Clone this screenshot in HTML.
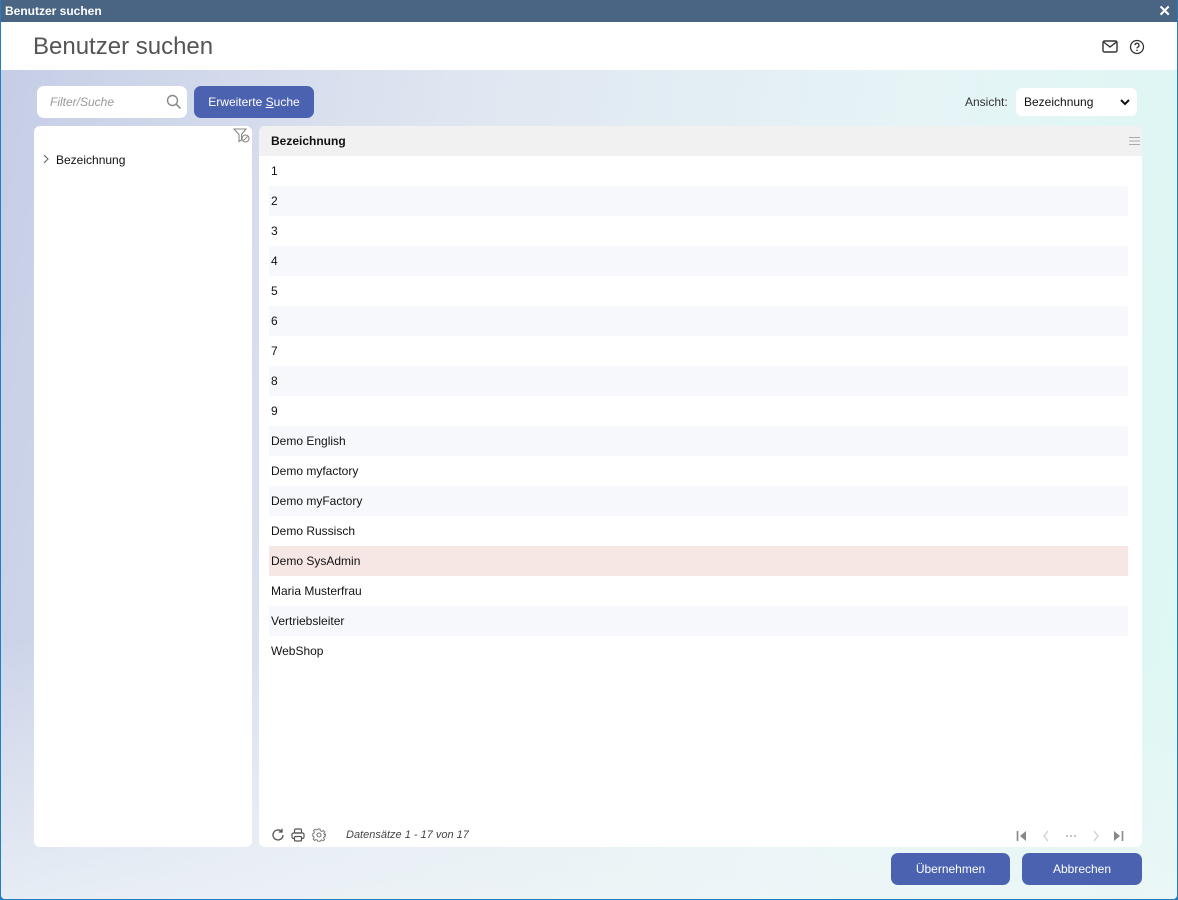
<!DOCTYPE html>
<html><head><meta charset="utf-8"><style>
*{box-sizing:border-box;margin:0;padding:0}
body{width:1178px;height:900px;overflow:hidden;font-family:"Liberation Sans",sans-serif;font-size:12px;color:#111;position:relative;background:#1f7fc4}
.win{position:absolute;left:1px;top:0;width:1176px;height:899px;background:linear-gradient(100deg,#c5cde6 0%,#dfe6f1 35%,#e6f4f6 70%,#dcf8f3 100%);border-radius:0 0 4px 4px;overflow:hidden}
.bot{position:absolute;left:0;right:0;bottom:0;height:260px;background:linear-gradient(180deg,rgba(255,255,255,0),rgba(240,246,248,.7))}
.tb{position:absolute;left:0;top:0;width:100%;height:22px;background:#4a6583;color:#fff;font-weight:bold;font-size:12px;padding:4px 4px}
.x{position:absolute;right:6px;top:2px;font-size:15px;color:#fff;font-weight:bold}
.hd{position:absolute;left:0;top:22px;width:100%;height:48px;background:#fff}
.hd h1{position:absolute;left:32px;top:11px;font-weight:normal;font-size:24px;color:#555}
.inp{position:absolute;left:36px;top:86px;width:150px;height:32px;background:#fff;border-radius:7px;color:#999;font-style:italic;padding:9px 13px}
.btn{position:absolute;background:#4a62b0;color:#fff;border-radius:7px;text-align:center;font-size:12px}
.pan{position:absolute;background:#fff;border-radius:6px;top:126px;height:721px}
.row{position:absolute;left:10px;width:859px;height:30px;padding:8px 2px}
svg.i{position:absolute}
</style></head><body>
<div class="win">
<div class="bot"></div>
<div class="tb">Benutzer suchen<span class="x">✕</span></div>
<div class="hd"><h1>Benutzer suchen</h1>
<svg style="position:absolute;left:1101px;top:18px" width="16" height="13" viewBox="0 0 16 13"><rect x="1" y="1" width="14" height="11" rx="1.5" fill="none" stroke="#333" stroke-width="1.4"/><path d="M1.5 2 L8 7 L14.5 2" fill="none" stroke="#333" stroke-width="1.4"/></svg>
<svg style="position:absolute;left:1128px;top:17px" width="16" height="16" viewBox="0 0 16 16"><circle cx="8" cy="8" r="6.5" fill="none" stroke="#333" stroke-width="1.3"/><path d="M6 6.3a2 2 0 1 1 2.6 1.9c-.5.2-.6.5-.6 1.2" fill="none" stroke="#333" stroke-width="1.3"/><circle cx="8" cy="11.3" r=".8" fill="#333"/></svg>
</div>
<div class="inp">Filter/Suche
<svg style="position:absolute;right:5px;top:8px" width="16" height="16" viewBox="0 0 16 16"><circle cx="6.5" cy="6.5" r="5" fill="none" stroke="#888" stroke-width="1.4"/><path d="M10.2 10.2 L14.5 14.5" stroke="#888" stroke-width="1.5"/></svg></div>
<div class="btn" style="left:193px;top:86px;width:120px;height:32px;padding-top:9px">Erweiterte <u>S</u>uche</div>
<div style="position:absolute;left:964px;top:95px;color:#333">Ansicht:</div>
<div style="position:absolute;left:1015px;top:88px;width:121px;height:28px;background:#fff;border-radius:6px;padding:7px 8px;font-size:12px">Bezeichnung
<svg style="position:absolute;right:7px;top:11px" width="10" height="7" viewBox="0 0 10 7"><path d="M1 1 L5 5 L9 1" fill="none" stroke="#111" stroke-width="2"/></svg></div>
<div class="pan" style="left:33px;width:218px">
<svg style="position:absolute;left:199px;top:2px" width="18" height="16" viewBox="0 0 18 16"><path d="M1 1 H13 L8.5 6.5 V12 L6 13.5 V6.5 Z" fill="none" stroke="#888" stroke-width="1.1"/><circle cx="12.5" cy="10.5" r="3.5" fill="#fff" stroke="#888" stroke-width="1.1"/><path d="M10.5 12.5 L14.5 8.5" stroke="#888"/></svg>
<svg style="position:absolute;left:9px;top:28px" width="6" height="10" viewBox="0 0 6 10"><path d="M1 1 L5 5 L1 9" fill="none" stroke="#666" stroke-width="1.1"/></svg>
<div style="position:absolute;left:22px;top:27px">Bezeichnung</div>
</div>
<div class="pan" style="left:258px;width:883px;overflow:hidden">
<div style="position:absolute;left:0;top:0;width:100%;height:30px;background:#f1f1f1;font-weight:bold;padding:8px 12px">Bezeichnung
<svg style="position:absolute;right:2px;top:10px" width="11" height="10" viewBox="0 0 11 10"><path d="M0 1.5H11M0 5H11M0 8.5H11" stroke="#aaa" stroke-width="1"/></svg></div>
<div class="row" style="top:30px">1</div>
<div class="row" style="top:60px;background:#f7f8fb">2</div>
<div class="row" style="top:90px">3</div>
<div class="row" style="top:120px;background:#f7f8fb">4</div>
<div class="row" style="top:150px">5</div>
<div class="row" style="top:180px;background:#f7f8fb">6</div>
<div class="row" style="top:210px">7</div>
<div class="row" style="top:240px;background:#f7f8fb">8</div>
<div class="row" style="top:270px">9</div>
<div class="row" style="top:300px;background:#f7f8fb">Demo English</div>
<div class="row" style="top:330px">Demo myfactory</div>
<div class="row" style="top:360px;background:#f7f8fb">Demo myFactory</div>
<div class="row" style="top:390px">Demo Russisch</div>
<div class="row" style="top:420px;background:#f6e6e4">Demo SysAdmin</div>
<div class="row" style="top:450px">Maria Musterfrau</div>
<div class="row" style="top:480px;background:#f7f8fb">Vertriebsleiter</div>
<div class="row" style="top:510px">WebShop</div>
<svg class="i" style="left:12px;top:702px" width="14" height="14" viewBox="0 0 14 14"><path d="M12 7A5 5 0 1 1 10.5 3.4" fill="none" stroke="#555" stroke-width="1.3"/><path d="M11 0.8V4H7.8" fill="none" stroke="#555" stroke-width="1.3"/></svg>
<svg class="i" style="left:32px;top:702px" width="14" height="14" viewBox="0 0 14 14"><rect x="3.5" y="1" width="7" height="4" rx="1" fill="none" stroke="#555" stroke-width="1.2"/><rect x="1" y="5" width="12" height="5.5" rx="1.5" fill="none" stroke="#555" stroke-width="1.2"/><rect x="3.5" y="8.5" width="7" height="4.5" rx="1" fill="#fff" stroke="#555" stroke-width="1.2"/></svg>
<svg class="i" style="left:53px;top:702px" width="14" height="14" viewBox="0 0 14 14"><circle cx="7" cy="7" r="2" fill="none" stroke="#777" stroke-width="1.1"/><path d="M6 1h2l.4 1.7 1.5.7 1.5-.9 1.4 1.4-.9 1.5.7 1.5L14 6v2l-1.7.4-.7 1.5.9 1.5-1.4 1.4-1.5-.9-1.5.7L8 14H6l-.4-1.7-1.5-.7-1.5.9-1.4-1.4.9-1.5-.7-1.5L0 8V6l1.7-.4.7-1.5-.9-1.5 1.4-1.4 1.5.9 1.5-.7Z" fill="none" stroke="#777" stroke-width="1"/></svg>
<div style="position:absolute;left:87px;top:703px;font-style:italic;color:#444;font-size:11px">Datensätze 1 - 17 von 17</div>
<svg class="i" style="left:757px;top:704px" width="110" height="12" viewBox="0 0 110 12"><path d="M1.5 1V11" stroke="#888" stroke-width="1.6"/><path d="M10 1L4 6L10 11Z" fill="#888"/><path d="M32 1L28 6L32 11" fill="none" stroke="#ccc" stroke-width="1.2"/><circle cx="51" cy="6" r=".9" fill="#999"/><circle cx="55" cy="6" r=".9" fill="#999"/><circle cx="59" cy="6" r=".9" fill="#999"/><path d="M78 1L82 6L78 11" fill="none" stroke="#ccc" stroke-width="1.2"/><path d="M98 1L104 6L98 11Z" fill="#888"/><path d="M106.5 1V11" stroke="#888" stroke-width="1.6"/></svg>
</div>
<div class="btn" style="left:890px;top:853px;width:119px;height:32px;padding-top:9px">Übernehmen</div>
<div class="btn" style="left:1021px;top:853px;width:120px;height:32px;padding-top:9px">Abbrechen</div>
</div>
</body></html>
